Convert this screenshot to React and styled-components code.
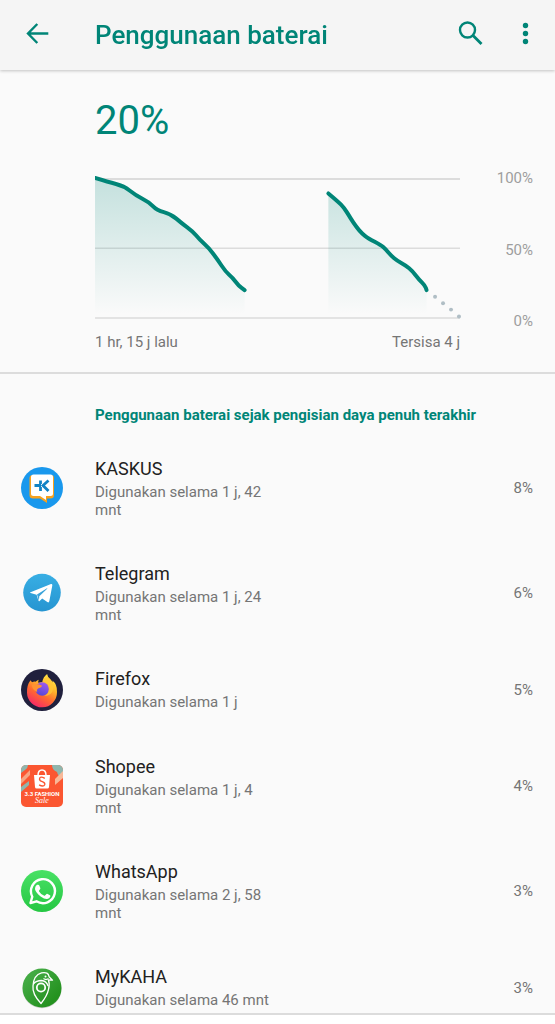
import React from 'react';
import styled, { createGlobalStyle, ThemeProvider } from 'styled-components';

const theme = {
  colors: {
    primary: '#008577',
    background: '#fafafa',
    header: '#f5f5f5',
    text: '#212121',
    lightText: '#757575',
    axis: '#9e9e9e',
    border: '#dcdcdc',
    projected: '#b0bec5',
  },
  fontSizes: {
    small: '15px',
    medium: '18px',
    large: '26px',
    xxlarge: '40px',
  },
  gutter: '21px',
  gutterEnd: '22px',
  textColumn: '95px',
};

const GlobalStyle = createGlobalStyle`
  * {
    box-sizing: border-box;
  }

  body {
    margin: 0;
    font-family: Roboto, 'Noto Sans', sans-serif;
    background: #ffffff;
  }
`;

const Screen = styled.div`
  display: flex;
  flex-direction: column;
  height: 100vh;
`;

const Header = styled.header`
  display: flex;
  align-items: center;
  flex-shrink: 0;
  height: 70px;
  padding: 0 10px 0 ${props => props.theme.gutter};
  background: ${props => props.theme.colors.header};
  box-shadow: 0 1px 3px rgba(0, 0, 0, 0.22);
  z-index: 1;
`;

const IconButton = styled.button`
  display: flex;
  align-items: center;
  justify-content: center;
  width: ${props => props.width || '32px'};
  height: 48px;
  padding: 0;
  border: 0;
  background: none;
  color: ${props => props.theme.colors.primary};
  cursor: pointer;
`;

const Title = styled.h1`
  flex: 1;
  margin: 0 0 0 42px;
  font-size: ${props => props.theme.fontSizes.large};
  line-height: 32px;
  font-weight: 500;
  color: ${props => props.theme.colors.primary};
`;

const Actions = styled.div`
  display: flex;
  gap: 18px;
`;

const Content = styled.main`
  flex: 1;
  min-height: 0;
  overflow-y: auto;
  scrollbar-width: none;
  background: ${props => props.theme.colors.background};
`;

const Summary = styled.section`
  padding: 26px ${props => props.theme.gutterEnd} 20px ${props => props.theme.textColumn};
  border-bottom: 2px solid ${props => props.theme.colors.border};
`;

const Level = styled.p`
  margin: 0 0 22px;
  font-size: ${props => props.theme.fontSizes.xxlarge};
  line-height: 50px;
  color: ${props => props.theme.colors.primary};
`;

const ChartArea = styled.div`
  display: grid;
  grid-template-columns: 1fr 73px;
  align-items: start;
`;

const Plot = styled.svg`
  display: block;
  width: 100%;
  margin-top: 8px;
  overflow: visible;
`;

const AxisLabels = styled.div`
  display: flex;
  flex-direction: column;
  justify-content: space-between;
  height: 163px;
  font-size: ${props => props.theme.fontSizes.small};
  line-height: 20px;
  text-align: right;
  color: ${props => props.theme.colors.axis};
`;

const TimeLabels = styled.div`
  display: flex;
  justify-content: space-between;
  margin-top: 12px;
  font-size: ${props => props.theme.fontSizes.small};
  line-height: 20px;
  color: ${props => props.theme.colors.lightText};
`;

const SectionTitle = styled.h2`
  margin: 0;
  padding: 31px ${props => props.theme.gutterEnd} 10px ${props => props.theme.textColumn};
  font-size: ${props => props.theme.fontSizes.small};
  line-height: 21px;
  font-weight: 700;
  color: ${props => props.theme.colors.primary};
`;

const AppList = styled.ul`
  margin: 0;
  padding: 0;
  list-style: none;
`;

const AppRow = styled.li`
  display: flex;
  align-items: center;
  min-height: 88px;
  padding: 0 ${props => props.theme.gutterEnd} 0 ${props => props.theme.gutter};
`;

const AppIcon = styled.svg`
  display: block;
  flex-shrink: 0;
  width: 42px;
  height: 42px;
  margin-right: 32px;
`;

const AppInfo = styled.div`
  max-width: 180px;
  padding: 21px 0 22px;
`;

const AppName = styled.h3`
  margin: 0 0 2px;
  font-size: ${props => props.theme.fontSizes.medium};
  line-height: 24px;
  font-weight: 400;
  color: ${props => props.theme.colors.text};
`;

const AppUsage = styled.p`
  margin: 0;
  font-size: ${props => props.theme.fontSizes.small};
  line-height: 18px;
  color: ${props => props.theme.colors.lightText};
`;

const AppPercent = styled.span`
  margin-left: auto;
  font-size: ${props => props.theme.fontSizes.small};
  line-height: 18px;
  color: ${props => props.theme.colors.lightText};
`;

const NavigationEdge = styled.footer`
  flex-shrink: 0;
  height: 11px;
  border-top: 2px solid ${props => props.theme.colors.border};
  background: #ffffff;
`;

const KaskusIcon = () => (
  <AppIcon viewBox="0 0 42 42" aria-hidden="true">
    <circle cx="21" cy="21" r="21" fill="#1998ed" />
    <path d="M12 8h18q3 0 3 3v17.500q0 3-3.500 3H26v4.500l-7-4.500h-7q-3.500 0-3.500-3.500V11q0-3 3.500-3z" fill="#f7a11d" />
    <path d="M12.500 7.500h17q2.500 0 2.500 2.500v16.500q0 2.500-2.500 2.500H25v4l-6-4h-6.500q-2.500 0-2.500-2.500V10q0-2.500 2.500-2.500z" fill="#fff" />
    <path d="M13.500 18.500h6.500M19.500 13.500v3.500M19.500 20v4M27.500 13.500L22 18.500l5.500 5.500" fill="none" stroke="#1283c5" strokeWidth="2.800" />
  </AppIcon>
);

const TelegramIcon = () => (
  <AppIcon viewBox="0 0 42 42" aria-hidden="true">
    <defs>
      <linearGradient id="telegram" x1="0" y1="0" x2="0" y2="1">
        <stop offset="0" stopColor="#38aee4" />
        <stop offset="1" stopColor="#2695d1" />
      </linearGradient>
    </defs>
    <circle cx="21" cy="20.600" r="18.800" fill="url(#telegram)" />
    <path d="M9.500 20.300L30 12.100q1.600-.5 1.300 1.400l-3 15.800q-.4 1.800-2 .8l-5.100-3.700-2.600 2.500q-.8.700-1.200-.5l-1.800-5.600-6-1.700q-1.300-.4-.1-.8z" fill="#fff" />
    <path d="M16 22.600l10-6.300q.8-.3.200.4l-7.900 7.500-.4 4.600z" fill="#3ba4da" />
  </AppIcon>
);

const FirefoxIcon = () => (
  <AppIcon viewBox="0 0 42 42" aria-hidden="true">
    <defs>
      <linearGradient id="fox" x1=".8" y1="0" x2=".25" y2="1">
        <stop offset="0" stopColor="#fff04a" />
        <stop offset=".35" stopColor="#ffb62b" />
        <stop offset=".62" stopColor="#ff6a2f" />
        <stop offset="1" stopColor="#f5226c" />
      </linearGradient>
      <linearGradient id="globe" x1=".7" y1="0" x2=".3" y2="1">
        <stop offset="0" stopColor="#a05af0" />
        <stop offset="1" stopColor="#5547d5" />
      </linearGradient>
    </defs>
    <circle cx="21" cy="21" r="21" fill="#20203d" />
    <path d="M9.500 11.300q.7 1 1.500 1.900 2-.8 3.600-.5 1.500-1.600 3.200-2-.9 1.700-.5 3l4-.6q.7-4.900 4.800-8.100.4 3.600 3.900 6.200 1 .8 1.800 2.200-.1-1.200-.4-2 5 3.800 4.600 11.600A15 15 0 0 1 6 23.700q-.3-7.600 3.500-12.400z" fill="url(#fox)" />
    <circle cx="21.200" cy="20" r="6.800" fill="url(#globe)" />
    <path d="M10.700 16.200q4.300-2.600 10.500.6-.5 1.800-3.700 2.400-2.300 1.200-1.200 3.700-4.600-1.700-5.600-6.700z" fill="#ff9333" />
    <path d="M22.500 12.500q6 2 5.300 8.300-.5 4.700-4.800 6.100 8.300 0 9.200-7.700.4-7.800-5.800-11.500-2.400 1.700-3.900 4.800z" fill="#ffc638" opacity=".8" />
  </AppIcon>
);

const ShopeeIcon = () => (
  <AppIcon viewBox="0 0 42 42" aria-hidden="true">
    <clipPath id="shopee-frame">
      <rect width="42" height="42" rx="5" />
    </clipPath>
    <g clipPath="url(#shopee-frame)">
      <rect width="42" height="42" fill="#fb5631" />
      <path d="M0 0h7q0 3-3 5l-4 3z" fill="#8fb6ad" />
      <path d="M0 22l8-6v4l-8 7z" fill="#8fb6ad" />
      <path d="M0 14L9 5v5L0 19z" fill="#f6a684" />
      <path d="M31 0h11v13q-5-1-6-6-5-2-5-7z" fill="#8fb6ad" />
      <path d="M42 6l-8 8v6l8-7z" fill="#f8b898" />
    </g>
    <path d="M13 10h16l-1 12q-.1 1.500-1.600 1.500H15.600Q14.100 23.500 14 22z" fill="#fff" />
    <path d="M17 10.500q0-5.500 4-5.500t4 5.500" fill="none" stroke="#fff" strokeWidth="1.500" />
    <path d="M23.800 13.300q-5-2.600-5.300.7 0 1.800 2.800 2.700 3 1 2.400 3-1.300 2.600-5.600.2" fill="none" stroke="#fb5631" strokeWidth="1.400" />
    <text x="21" y="31" textAnchor="middle" fill="#fff" fontFamily="Roboto, sans-serif" fontSize="6" fontWeight="700">3.3 FASHION</text>
    <text x="21" y="38" textAnchor="middle" fill="#fff" fontFamily="'Liberation Serif', serif" fontSize="8" fontStyle="italic">Sale</text>
  </AppIcon>
);

const WhatsAppIcon = () => (
  <AppIcon viewBox="0 0 42 42" aria-hidden="true">
    <defs>
      <linearGradient id="whatsapp" x1="0" y1="0" x2="0" y2="1">
        <stop offset="0" stopColor="#49e165" />
        <stop offset="1" stopColor="#25c743" />
      </linearGradient>
    </defs>
    <circle cx="21" cy="21" r="21" fill="url(#whatsapp)" />
    <path d="M9.500 33l1.800-6.300A12 12 0 1 1 15.500 31.300z" fill="none" stroke="#fff" strokeWidth="2.400" strokeLinejoin="round" />
    <path d="M16.800 14.700q1-.2 1.500.8l1.100 2.700q.2.600-1.300 2.200-.4.500 0 1 2 3.300 5.200 4.300.6.200 1-.4 1.300-1.800 1.800-1.500l2.900 1.400q.6.300.3 1.400-.6 2.100-3.200 2.400-2.600.2-6.500-2.500-5.100-4-5.600-7.400-.1-2.700 1.700-4.200.4-.3 1.100-.2z" fill="#fff" />
  </AppIcon>
);

const MyKahaIcon = () => (
  <AppIcon viewBox="0 0 42 42" aria-hidden="true">
    <defs>
      <linearGradient id="mykaha" x1="0" y1="0" x2="1" y2="1">
        <stop offset=".2" stopColor="#43aa43" />
        <stop offset=".8" stopColor="#24921f" />
      </linearGradient>
    </defs>
    <circle cx="21" cy="21.800" r="19.500" fill="#c8cfc8" />
    <circle cx="21" cy="21" r="19.500" fill="url(#mykaha)" />
    <g fill="none" stroke="#fff" strokeWidth="1.300" strokeLinejoin="round">
      <path d="M12 19q.5-11 8.500-13.200 7-1.300 7.600 4l3.400 3.400-4.200-.4q1.700 4 .3 9.400-1.500 7-7.600 14.300-9-9.500-8-17.500z" />
      <path d="M12.300 17q3-3.500 8.200-3.500 5 .3 6.600 5.500M22.500 11.500q2.500 2 5 0" />
      <circle cx="20" cy="20.500" r="4.200" strokeWidth="1.800" />
    </g>
    <circle cx="24.500" cy="9.500" r="1" fill="#fff" />
  </AppIcon>
);

const apps = [
  { name: 'KASKUS', usage: 'Digunakan selama 1 j, 42 mnt', percent: 8, Icon: KaskusIcon },
  { name: 'Telegram', usage: 'Digunakan selama 1 j, 24 mnt', percent: 6, Icon: TelegramIcon },
  { name: 'Firefox', usage: 'Digunakan selama 1 j', percent: 5, Icon: FirefoxIcon },
  { name: 'Shopee', usage: 'Digunakan selama 1 j, 4 mnt', percent: 4, Icon: ShopeeIcon },
  { name: 'WhatsApp', usage: 'Digunakan selama 2 j, 58 mnt', percent: 3, Icon: WhatsAppIcon },
  { name: 'MyKAHA', usage: 'Digunakan selama 46 mnt', percent: 3, Icon: MyKahaIcon },
];

const periods = [
  [[0, 2], [13, 6], [29, 10], [41, 19.5], [54, 26], [62, 34.5], [76, 38], [87, 47.5], [98, 55.5], [105, 64], [114, 72], [123, 84], [131, 96], [138, 102], [144, 110], [150, 114.5]],
  [[234, 17.5], [243, 25], [250, 32], [256, 42], [262, 51], [268, 58], [274, 62.5], [287, 69.5], [291, 73], [297, 80], [303, 85], [312, 90], [318, 95], [325, 104], [331, 110], [332.5, 114.5]],
];

const projected = [[341, 121], [349, 127.5], [357, 134], [365, 141]];

// Smooths the samples by curving through the midpoints between them
const toCurve = (points) => {
  const last = points[points.length - 1];
  let d = `M${points[0].join(' ')}`;
  for (let i = 1; i < points.length - 1; i++) {
    const [x, y] = points[i];
    const [nextX, nextY] = points[i + 1];
    d += `Q${x} ${y} ${(x + nextX) / 2} ${(y + nextY) / 2}`;
  }
  return `${d}L${last.join(' ')}`;
};

const BatteryChart = () => (
  <Plot viewBox="0 0 366 144" role="img" aria-label="Grafik level baterai">
    <defs>
      <linearGradient id="usage" gradientUnits="userSpaceOnUse" x1="0" y1="0" x2="0" y2="139">
        <stop offset="0" stopColor={theme.colors.primary} stopOpacity=".22" />
        <stop offset="1" stopColor={theme.colors.primary} stopOpacity="0" />
      </linearGradient>
      <clipPath id="plot-area">
        <rect x="0" y="-4" width="370" height="150" />
      </clipPath>
    </defs>
    <path d="M0 3h366" stroke={theme.colors.border} strokeWidth="2" />
    <path d="M0 72.500h366M0 142.300h366" stroke={theme.colors.border} strokeWidth="1.500" />
    <g clipPath="url(#plot-area)">
      {periods.map((points, index) => (
        <g key={index}>
          <path
            d={`${toCurve(points)}V141H${points[0][0]}Z`}
            fill="url(#usage)"
          />
          <path
            d={toCurve(points)}
            fill="none"
            stroke={theme.colors.primary}
            strokeWidth="4"
            strokeLinecap="round"
            strokeLinejoin="round"
          />
        </g>
      ))}
    </g>
    {projected.map(([x, y]) => (
      <circle key={x} cx={x} cy={y} r="2" fill={theme.colors.projected} />
    ))}
  </Plot>
);

const App = () => (
  <ThemeProvider theme={theme}>
    <GlobalStyle />
    <Screen>
      <Header>
        <IconButton type="button" aria-label="Kembali">
          <svg width="32" height="32" viewBox="0 0 32 32" fill="none" stroke="currentColor" strokeWidth="2.400">
            <path d="M27.300 14.500H7M16.300 5L7 14.500l9.300 9.500" />
          </svg>
        </IconButton>
        <Title>Penggunaan baterai</Title>
        <Actions>
          <IconButton type="button" aria-label="Telusuri">
            <svg width="32" height="32" viewBox="0 0 32 32" fill="none" stroke="currentColor">
              <circle cx="12.500" cy="11" r="7.500" strokeWidth="2.400" />
              <path d="M17.500 16l9 9" strokeWidth="2.800" />
            </svg>
          </IconButton>
          <IconButton type="button" aria-label="Opsi lainnya" width="40px">
            <svg width="32" height="32" viewBox="0 0 32 32" fill="currentColor">
              <circle cx="16.500" cy="6.500" r="2.700" />
              <circle cx="16.500" cy="14.500" r="2.700" />
              <circle cx="16.500" cy="22.500" r="2.700" />
            </svg>
          </IconButton>
        </Actions>
      </Header>

      <Content>
        <Summary>
          <Level>20%</Level>
          <ChartArea>
            <div>
              <BatteryChart />
              <TimeLabels>
                <span>1 hr, 15 j lalu</span>
                <span>Tersisa 4 j</span>
              </TimeLabels>
            </div>
            <AxisLabels>
              <span>100%</span>
              <span>50%</span>
              <span>0%</span>
            </AxisLabels>
          </ChartArea>
        </Summary>

        <SectionTitle>Penggunaan baterai sejak pengisian daya penuh terakhir</SectionTitle>
        <AppList>
          {apps.map(({ name, usage, percent, Icon }) => (
            <AppRow key={name}>
              <Icon />
              <AppInfo>
                <AppName>{name}</AppName>
                <AppUsage>{usage}</AppUsage>
              </AppInfo>
              <AppPercent>{percent}%</AppPercent>
            </AppRow>
          ))}
        </AppList>
      </Content>
      <NavigationEdge />
    </Screen>
  </ThemeProvider>
);

export default App;
